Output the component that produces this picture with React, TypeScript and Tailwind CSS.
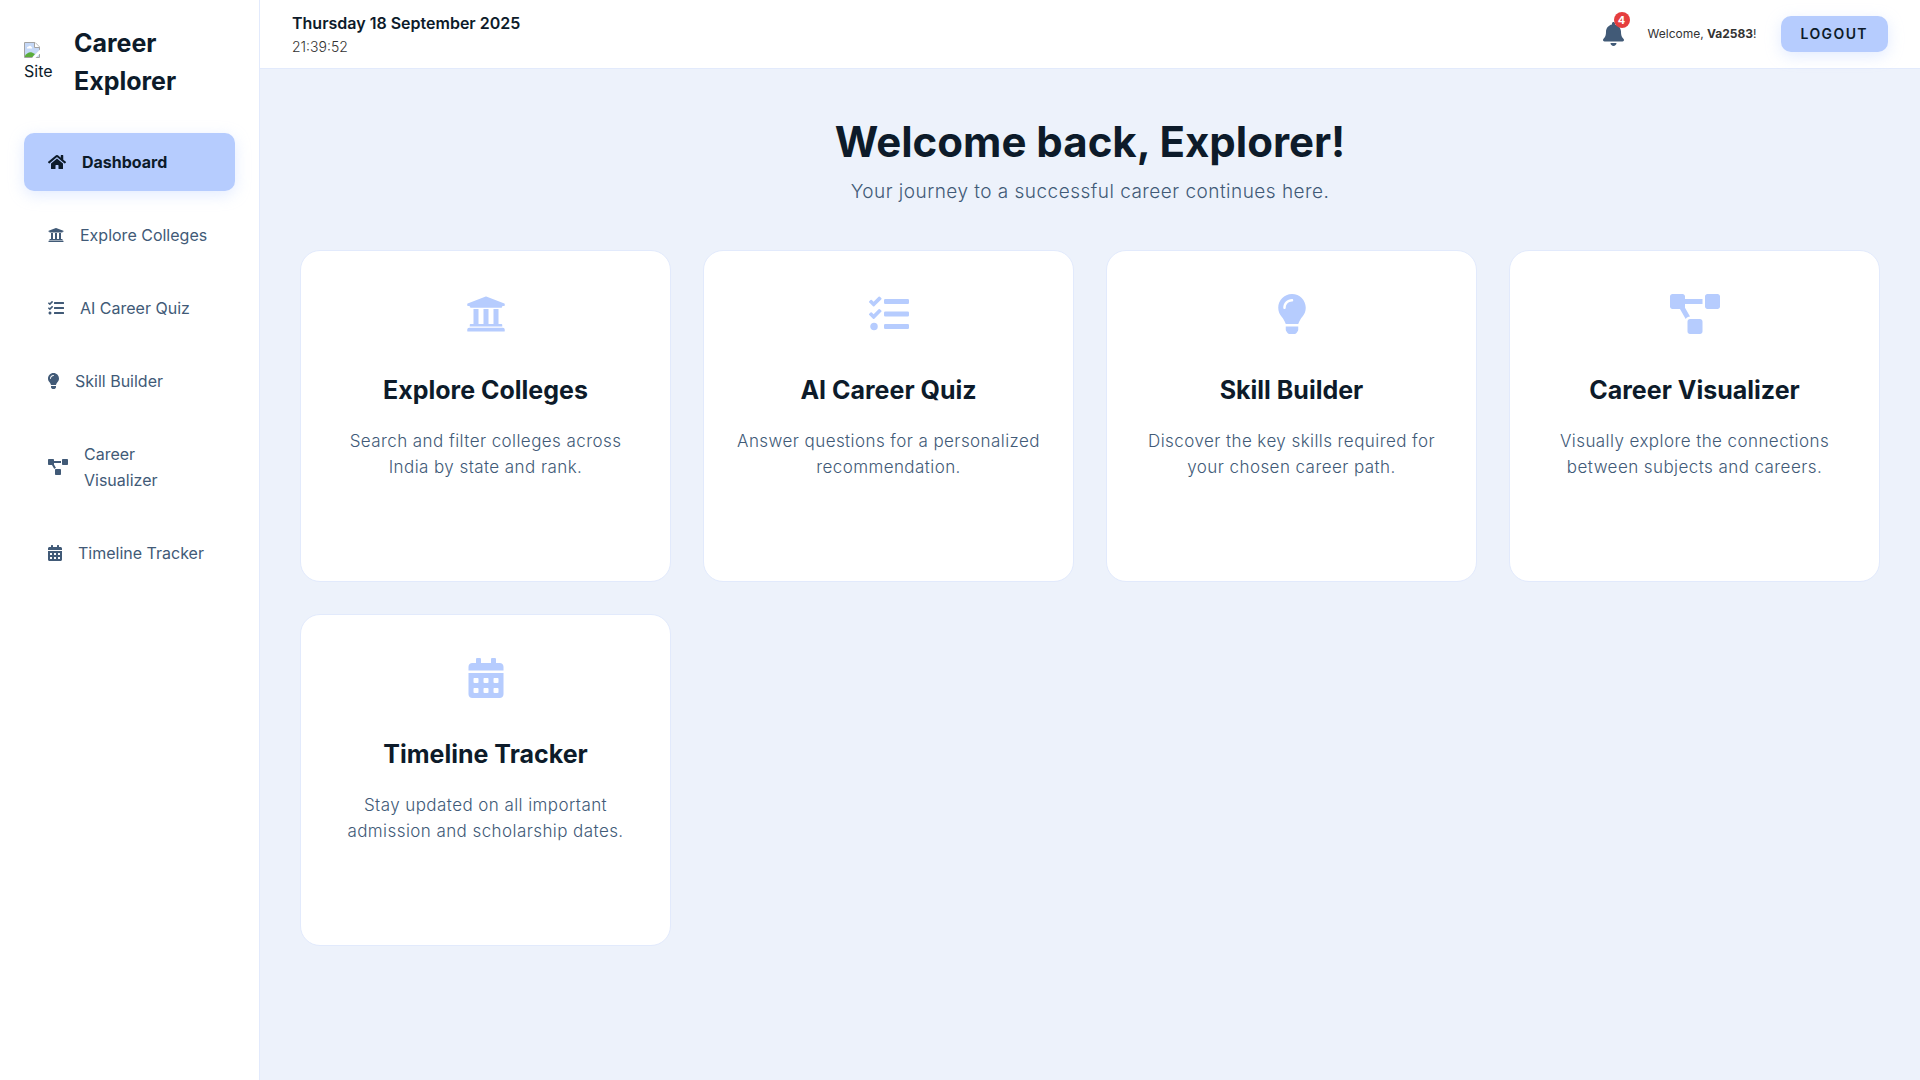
import type { IconType } from "react-icons";
import {
  FaBell,
  FaCalendarAlt,
  FaHome,
  FaLightbulb,
  FaProjectDiagram,
  FaTasks,
  FaUniversity,
} from "react-icons/fa";

type NavItem = { label: string; icon: IconType; iconClass: string; active?: boolean };
type Feature = { title: string; text: string; icon: IconType; iconClass: string };

const navItems: NavItem[] = [
  { label: "Dashboard", icon: FaHome, iconClass: "h-4 w-[18px]", active: true },
  { label: "Explore Colleges", icon: FaUniversity, iconClass: "h-4 w-4" },
  { label: "AI Career Quiz", icon: FaTasks, iconClass: "h-4 w-4" },
  { label: "Skill Builder", icon: FaLightbulb, iconClass: "h-4 w-[11px]" },
  { label: "Career Visualizer", icon: FaProjectDiagram, iconClass: "h-4 w-5" },
  { label: "Timeline Tracker", icon: FaCalendarAlt, iconClass: "h-4 w-3.5" },
];

const features: Feature[] = [
  {
    title: "Explore Colleges",
    text: "Search and filter colleges across India by state and rank.",
    icon: FaUniversity,
    iconClass: "w-10",
  },
  {
    title: "AI Career Quiz",
    text: "Answer questions for a personalized recommendation.",
    icon: FaTasks,
    iconClass: "w-10",
  },
  {
    title: "Skill Builder",
    text: "Discover the key skills required for your chosen career path.",
    icon: FaLightbulb,
    iconClass: "w-7",
  },
  {
    title: "Career Visualizer",
    text: "Visually explore the connections between subjects and careers.",
    icon: FaProjectDiagram,
    iconClass: "w-[50px]",
  },
  {
    title: "Timeline Tracker",
    text: "Stay updated on all important admission and scholarship dates.",
    icon: FaCalendarAlt,
    iconClass: "w-9",
  },
];

/* Placeholder for a logo that has not loaded, with its alternative text. */
function LogoPlaceholder() {
  return (
    <div className="flex w-[30px] shrink-0 flex-col pt-0.5 text-base leading-[26px] text-[#0d1b2a]">
      <svg viewBox="0 0 16 16" className="size-4" aria-hidden="true">
        <path d="M0.500 0.500H11L15.500 5V15.500H0.500Z" fill="#fff" stroke="#a3a3a3" />
        <path d="M1 1H10.500V5.500H15V15H1Z" fill="#c5d8f7" />
        <path d="M10.500 0.500V5.500H15.500" fill="#fff" stroke="#a3a3a3" />
        <path d="M3 6.500a1.500 1.500 0 0 1 1.500-2 1.700 1.700 0 0 1 3 .500 1 1 0 0 1 .500 1.500z" fill="#fff" />
        <path d="M1 15v-1.500C3 11 5.500 9.500 8 10.500l3 1.500L8.500 15z" fill="#5bad3c" />
        <path d="M16 7.500L8 16H11.500L16 11.500z" fill="#fff" />
      </svg>
      <span>Site</span>
    </div>
  );
}

function Sidebar() {
  return (
    <aside className="w-[260px] shrink-0 border-r border-[#e2eafc] bg-white px-6 pt-6">
      <div className="flex items-center gap-5">
        <LogoPlaceholder />
        <div className="text-[25px] leading-[38px] font-bold">Career Explorer</div>
      </div>
      <nav className="mt-[33px] flex flex-col gap-[15px]">
        {navItems.map(({ label, icon: Icon, iconClass, active }) => (
          <a
            key={label}
            href="#"
            aria-current={active ? "page" : undefined}
            className={
              active
                ? "flex items-center gap-4 rounded-[10px] bg-[#b6ccfe] px-6 py-4 leading-[26px] font-bold text-[#0d1b2a] shadow-[0_4px_15px_rgba(182,204,254,0.4)]"
                : "flex items-center gap-4 rounded-[10px] px-6 py-4 leading-[26px] text-[#415a77]"
            }
          >
            <Icon className={`shrink-0 ${iconClass}`} />
            <span>{label}</span>
          </a>
        ))}
      </nav>
    </aside>
  );
}

function TopBar() {
  return (
    <header className="flex items-center justify-between border-b border-[#e2eafc] bg-white px-8 py-2.5">
      <div>
        <div className="text-base leading-[26px] font-semibold">Thursday 18 September 2025</div>
        <div className="text-sm leading-[22px] font-light text-[#333333]">21:39:52</div>
      </div>
      <div className="flex items-center gap-6">
        <button type="button" aria-label="Notifications" className="relative text-[#415a77]">
          <FaBell className="h-6 w-[21px]" />
          <span className="absolute -top-2.5 -right-1.5 flex size-4 items-center justify-center rounded-full bg-[#e53e3e] text-[11px] font-bold text-white">
            4
          </span>
        </button>
        <span className="text-xs text-[#333333]">
          Welcome, <strong className="font-bold">Va2583</strong>!
        </span>
        <button
          type="button"
          className="h-9 rounded-[10px] bg-[#b6ccfe] px-5 text-sm font-semibold tracking-widest text-[#0d1b2a] shadow-[0_4px_15px_rgba(182,204,254,0.4)]"
        >
          LOGOUT
        </button>
      </div>
    </header>
  );
}

function FeatureCard({ title, text, icon: Icon, iconClass }: Feature) {
  return (
    <a
      href="#"
      className="flex min-h-[332px] flex-col items-center rounded-[20px] border border-[#e2eafc] bg-white px-8 pt-[43px] pb-10 text-center"
    >
      <Icon className={`h-10 text-[#b6ccfe] ${iconClass}`} />
      <h2 className="mt-[37px] text-[25px] leading-[38px] font-bold">{title}</h2>
      <p className="mt-[19px] text-[17px] leading-[26px] font-light tracking-wide text-[#415a77]">{text}</p>
    </a>
  );
}

export default function App() {
  return (
    <div className="flex min-h-screen bg-[#edf2fb] font-['Inter',sans-serif] text-[#0d1b2a]">
      <Sidebar />
      <div className="flex min-w-0 flex-1 flex-col">
        <TopBar />
        <main className="px-10 pt-10 pb-10">
          <div className="text-center">
            <h1 className="text-[42px] leading-[66px] font-bold">Welcome back, Explorer!</h1>
            <p className="mt-0.5 text-[19px] leading-[29px] font-light tracking-wide text-[#415a77]">
              Your journey to a successful career continues here.
            </p>
          </div>
          <section className="mt-11 grid grid-cols-[repeat(auto-fill,minmax(320px,1fr))] gap-8">
            {features.map((feature) => (
              <FeatureCard key={feature.title} {...feature} />
            ))}
          </section>
        </main>
      </div>
    </div>
  );
}
